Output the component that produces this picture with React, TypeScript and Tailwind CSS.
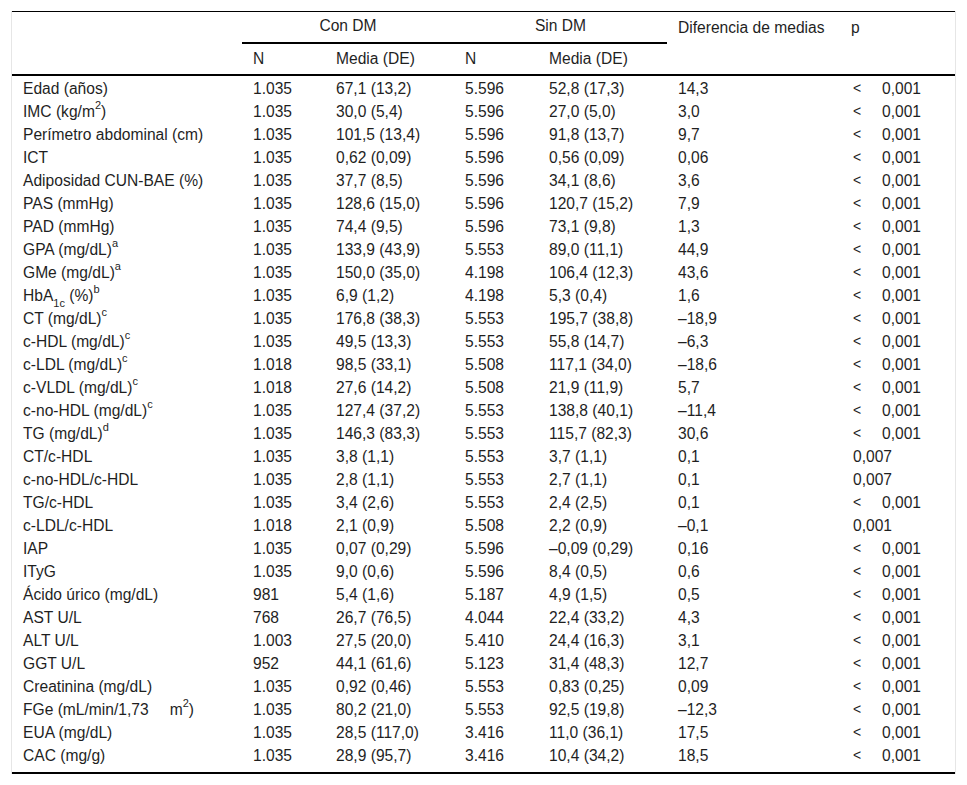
import React from "react"

type Row = {
  label: React.ReactNode
  n1: string
  m1: string
  n2: string
  m2: string
  diff: string
  p: string
  lt?: boolean
}

const sup = (s: string) => <sup className="text-[11px] relative -top-[1px] align-super leading-none">{s}</sup>

const rows: Row[] = [
  { label: "Edad (años)", n1: "1.035", m1: "67,1 (13,2)", n2: "5.596", m2: "52,8 (17,3)", diff: "14,3", p: "0,001", lt: true },
  { label: <>IMC (kg/m{sup("2")})</>, n1: "1.035", m1: "30,0 (5,4)", n2: "5.596", m2: "27,0 (5,0)", diff: "3,0", p: "0,001", lt: true },
  { label: "Perímetro abdominal (cm)", n1: "1.035", m1: "101,5 (13,4)", n2: "5.596", m2: "91,8 (13,7)", diff: "9,7", p: "0,001", lt: true },
  { label: "ICT", n1: "1.035", m1: "0,62 (0,09)", n2: "5.596", m2: "0,56 (0,09)", diff: "0,06", p: "0,001", lt: true },
  { label: "Adiposidad CUN-BAE (%)", n1: "1.035", m1: "37,7 (8,5)", n2: "5.596", m2: "34,1 (8,6)", diff: "3,6", p: "0,001", lt: true },
  { label: "PAS (mmHg)", n1: "1.035", m1: "128,6 (15,0)", n2: "5.596", m2: "120,7 (15,2)", diff: "7,9", p: "0,001", lt: true },
  { label: "PAD (mmHg)", n1: "1.035", m1: "74,4 (9,5)", n2: "5.596", m2: "73,1 (9,8)", diff: "1,3", p: "0,001", lt: true },
  { label: <>GPA (mg/dL){sup("a")}</>, n1: "1.035", m1: "133,9 (43,9)", n2: "5.553", m2: "89,0 (11,1)", diff: "44,9", p: "0,001", lt: true },
  { label: <>GMe (mg/dL){sup("a")}</>, n1: "1.035", m1: "150,0 (35,0)", n2: "4.198", m2: "106,4 (12,3)", diff: "43,6", p: "0,001", lt: true },
  {
    label: (
      <>
        HbA<sub className="text-[11px] relative top-[2px] align-sub leading-none">1c</sub> (%){sup("b")}
      </>
    ),
    n1: "1.035", m1: "6,9 (1,2)", n2: "4.198", m2: "5,3 (0,4)", diff: "1,6", p: "0,001", lt: true,
  },
  { label: <>CT (mg/dL){sup("c")}</>, n1: "1.035", m1: "176,8 (38,3)", n2: "5.553", m2: "195,7 (38,8)", diff: "–18,9", p: "0,001", lt: true },
  { label: <>c-HDL (mg/dL){sup("c")}</>, n1: "1.035", m1: "49,5 (13,3)", n2: "5.553", m2: "55,8 (14,7)", diff: "–6,3", p: "0,001", lt: true },
  { label: <>c-LDL (mg/dL){sup("c")}</>, n1: "1.018", m1: "98,5 (33,1)", n2: "5.508", m2: "117,1 (34,0)", diff: "–18,6", p: "0,001", lt: true },
  { label: <>c-VLDL (mg/dL){sup("c")}</>, n1: "1.018", m1: "27,6 (14,2)", n2: "5.508", m2: "21,9 (11,9)", diff: "5,7", p: "0,001", lt: true },
  { label: <>c-no-HDL (mg/dL){sup("c")}</>, n1: "1.035", m1: "127,4 (37,2)", n2: "5.553", m2: "138,8 (40,1)", diff: "–11,4", p: "0,001", lt: true },
  { label: <>TG (mg/dL){sup("d")}</>, n1: "1.035", m1: "146,3 (83,3)", n2: "5.553", m2: "115,7 (82,3)", diff: "30,6", p: "0,001", lt: true },
  { label: "CT/c-HDL", n1: "1.035", m1: "3,8 (1,1)", n2: "5.553", m2: "3,7 (1,1)", diff: "0,1", p: "0,007" },
  { label: "c-no-HDL/c-HDL", n1: "1.035", m1: "2,8 (1,1)", n2: "5.553", m2: "2,7 (1,1)", diff: "0,1", p: "0,007" },
  { label: "TG/c-HDL", n1: "1.035", m1: "3,4 (2,6)", n2: "5.553", m2: "2,4 (2,5)", diff: "0,1", p: "0,001", lt: true },
  { label: "c-LDL/c-HDL", n1: "1.018", m1: "2,1 (0,9)", n2: "5.508", m2: "2,2 (0,9)", diff: "–0,1", p: "0,001" },
  { label: "IAP", n1: "1.035", m1: "0,07 (0,29)", n2: "5.596", m2: "–0,09 (0,29)", diff: "0,16", p: "0,001", lt: true },
  { label: "ITyG", n1: "1.035", m1: "9,0 (0,6)", n2: "5.596", m2: "8,4 (0,5)", diff: "0,6", p: "0,001", lt: true },
  { label: "Ácido úrico (mg/dL)", n1: "981", m1: "5,4 (1,6)", n2: "5.187", m2: "4,9 (1,5)", diff: "0,5", p: "0,001", lt: true },
  { label: "AST U/L", n1: "768", m1: "26,7 (76,5)", n2: "4.044", m2: "22,4 (33,2)", diff: "4,3", p: "0,001", lt: true },
  { label: "ALT U/L", n1: "1.003", m1: "27,5 (20,0)", n2: "5.410", m2: "24,4 (16,3)", diff: "3,1", p: "0,001", lt: true },
  { label: "GGT U/L", n1: "952", m1: "44,1 (61,6)", n2: "5.123", m2: "31,4 (48,3)", diff: "12,7", p: "0,001", lt: true },
  { label: "Creatinina (mg/dL)", n1: "1.035", m1: "0,92 (0,46)", n2: "5.553", m2: "0,83 (0,25)", diff: "0,09", p: "0,001", lt: true },
  {
    label: (
      <>
        FGe (mL/min/1,73<span className="inline-block w-[21px]" />m{sup("2")})
      </>
    ),
    n1: "1.035", m1: "80,2 (21,0)", n2: "5.553", m2: "92,5 (19,8)", diff: "–12,3", p: "0,001", lt: true,
  },
  { label: "EUA (mg/dL)", n1: "1.035", m1: "28,5 (117,0)", n2: "3.416", m2: "11,0 (36,1)", diff: "17,5", p: "0,001", lt: true },
  { label: "CAC (mg/g)", n1: "1.035", m1: "28,9 (95,7)", n2: "3.416", m2: "10,4 (34,2)", diff: "18,5", p: "0,001", lt: true },
]

export default function App() {
  return (
    <div
      className="w-[967px] h-[785px] bg-white pt-[11px] px-[11px] text-[#1f1f1f] text-[15.6px]"
      style={{ fontFamily: '"Liberation Sans", Arial, sans-serif' }}
    >
      <div className="border-x border-[#e6e6e6]">
        <table className="w-full border-collapse table-fixed border-t border-b-2 border-black">
          <colgroup>
            <col className="w-[230px]" />
            <col className="w-[83px]" />
            <col className="w-[129px]" />
            <col className="w-[84px]" />
            <col className="w-[129px]" />
            <col className="w-[173px]" />
            <col />
          </colgroup>
          <thead>
            <tr className="h-[31px]">
              <th rowSpan={2} className="border-b-2 border-black" />
              <th colSpan={2} className="font-normal text-center align-middle border-b-2 border-black pb-[3px]">
                Con DM
              </th>
              <th colSpan={2} className="font-normal text-center align-middle border-b-2 border-black pb-[3px]">
                Sin DM
              </th>
              <th rowSpan={2} className="font-normal text-left align-top pl-[11px] pt-[4px] border-b-2 border-black">
                Diferencia de medias
              </th>
              <th rowSpan={2} className="font-normal text-left align-top pl-[11px] pt-[4px] border-b-2 border-black">
                p
              </th>
            </tr>
            <tr className="h-[32px] border-b-2 border-black">
              <th className="font-normal text-left pl-[11px] pt-[1px]">N</th>
              <th className="font-normal text-left pl-[11px] pt-[1px]">Media (DE)</th>
              <th className="font-normal text-left pl-[11px] pt-[1px]">N</th>
              <th className="font-normal text-left pl-[11px] pt-[1px]">Media (DE)</th>
            </tr>
          </thead>
          <tbody>
            {rows.map((r, i) => {
              const last = i === rows.length - 1
              const cell = `text-left pl-[11px] align-top leading-[23px] ${i === 0 ? "pt-[1px]" : ""} ${last ? "pb-[5px]" : ""}`
              return (
                <tr key={i}>
                  <td className={cell}>{r.label}</td>
                  <td className={cell}>{r.n1}</td>
                  <td className={cell}>{r.m1}</td>
                  <td className={cell}>{r.n2}</td>
                  <td className={cell}>{r.m2}</td>
                  <td className={cell}>{r.diff}</td>
                  <td className={`${cell} pl-[13px]`}>
                    {r.lt ? (
                      <span className="flex">
                        <span className="w-[29px] text-[14px]">&lt;</span>
                        <span>{r.p}</span>
                      </span>
                    ) : (
                      r.p
                    )}
                  </td>
                </tr>
              )
            })}
          </tbody>
        </table>
      </div>
    </div>
  )
}
